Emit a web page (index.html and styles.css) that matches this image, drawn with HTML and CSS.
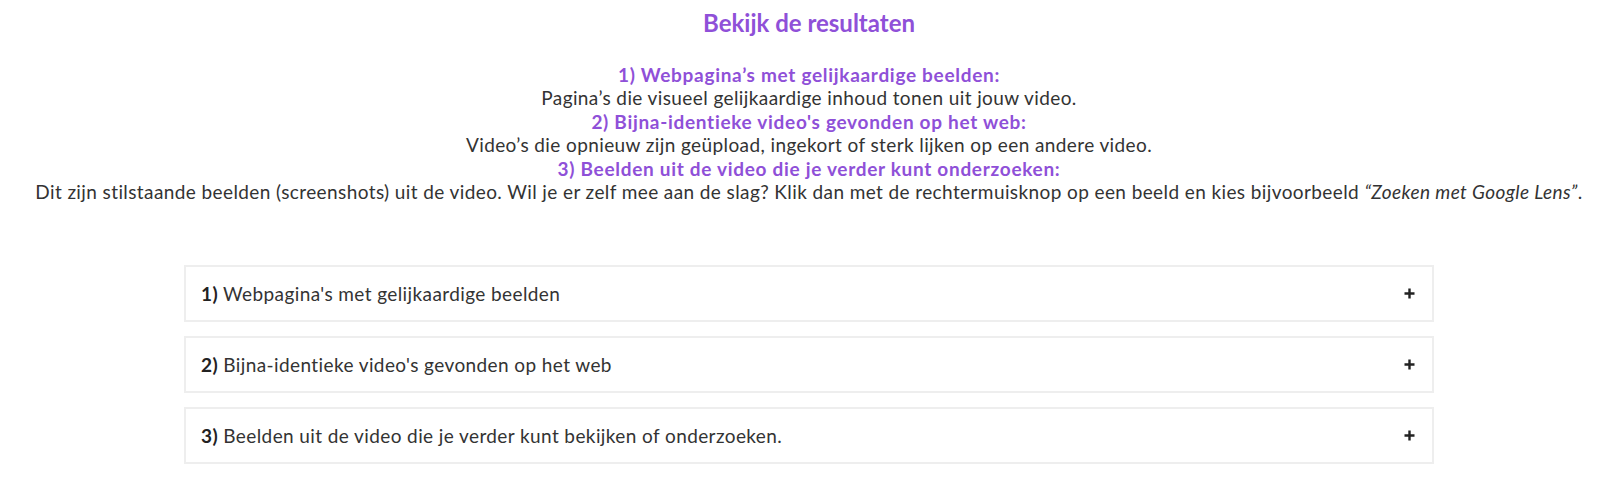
FILE: index.html
```html
<!DOCTYPE html>
<html lang="nl">
<head>
<meta charset="utf-8">
<title>Bekijk de resultaten</title>
<link rel="stylesheet" href="styles.css">
</head>
<body>
<main class="page">
  <section class="intro">
    <h2 class="title">Bekijk de resultaten</h2>
    <p class="explain">
      <strong class="hl">1) Webpagina’s met gelijkaardige beelden:</strong><br>
      Pagina’s die visueel gelijkaardige inhoud tonen uit jouw video.<br>
      <strong class="hl">2) Bijna-identieke video's gevonden op het web:</strong><br>
      Video’s die opnieuw zijn geüpload, ingekort of sterk lijken op een andere video.<br>
      <strong class="hl">3) Beelden uit de video die je verder kunt onderzoeken:</strong><br>
      Dit zijn stilstaande beelden (screenshots) uit de video. Wil je er zelf mee aan de slag? Klik dan met de rechtermuisknop op een beeld en kies bijvoorbeeld <em>“Zoeken met Google Lens”</em>.
    </p>
  </section>
  <section class="accordion">
    <div class="acc-item">
      <span class="acc-label"><b>1)</b> Webpagina's met gelijkaardige beelden</span>
      <svg class="plus" width="11" height="11" viewBox="0 0 11 11"><path d="M5.5 0.5v10M0.5 5.5h10" stroke="#222" stroke-width="2.4" fill="none"/></svg>
    </div>
    <div class="acc-item">
      <span class="acc-label"><b>2)</b> Bijna-identieke video's gevonden op het web</span>
      <svg class="plus" width="11" height="11" viewBox="0 0 11 11"><path d="M5.5 0.5v10M0.5 5.5h10" stroke="#222" stroke-width="2.4" fill="none"/></svg>
    </div>
    <div class="acc-item">
      <span class="acc-label"><b>3)</b> Beelden uit de video die je verder kunt bekijken of onderzoeken.</span>
      <svg class="plus" width="11" height="11" viewBox="0 0 11 11"><path d="M5.5 0.5v10M0.5 5.5h10" stroke="#222" stroke-width="2.4" fill="none"/></svg>
    </div>
  </section>
</main>
</body>
</html>
```

FILE: styles.css
```css
html, body {
  margin: 0;
  padding: 0;
  background: #ffffff;
}
body {
  font-family: "Lato", "Liberation Sans", sans-serif;
  color: #333333;
  padding-right: 6px;
}
.page {
  display: flex;
  flex-direction: column;
  align-items: center;
}
.intro {
  text-align: center;
  width: 100%;
}
.title {
  margin: 0;
  padding-top: 8px;
  font-size: 24px;
  line-height: 30px;
  font-weight: 700;
  color: #8f50d8;
}
.explain {
  margin: 25px 0 0;
  font-size: 19px;
  line-height: 23.4px;
  letter-spacing: 0.4px;
  color: #333333;
}
.hl {
  color: #8f50d8;
  font-weight: 700;
  letter-spacing: 0.7px;
}
.accordion {
  width: 1250px;
  margin-top: 62px;
  display: flex;
  flex-direction: column;
  gap: 14px;
}
.acc-item {
  display: flex;
  align-items: center;
  justify-content: space-between;
  border: 2px solid #eeeeee;
  padding: 15px 17px 15px 15px;
  font-size: 19px;
  line-height: 23px;
  letter-spacing: 0.4px;
  color: #333333;
}
.acc-label b {
  font-weight: 700;
  color: #222222;
}
.plus {
  display: block;
}
```
